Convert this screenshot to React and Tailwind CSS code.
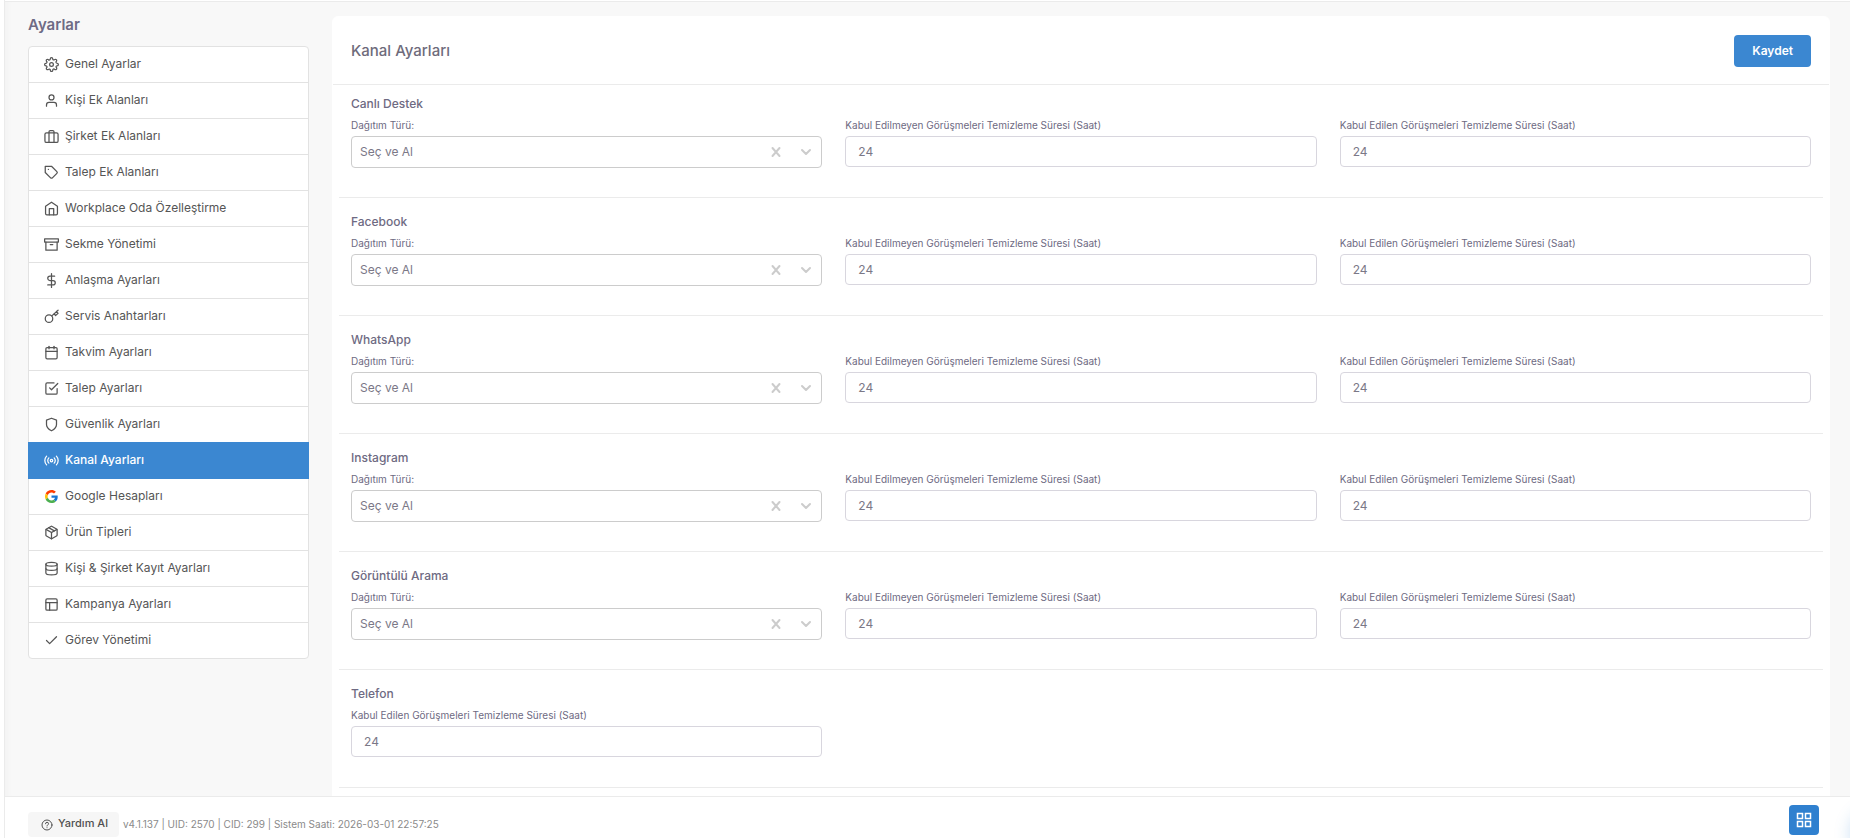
import React, { useState } from "react";
import {
  FiSettings,
  FiUser,
  FiTag,
  FiArchive,
  FiDollarSign,
  FiCalendar,
  FiCheckSquare,
  FiShield,
  FiPackage,
  FiDatabase,
  FiLayout,
  FiCheck,
} from "react-icons/fi";

// stroke icons that are not in the feather set
const StrokeIcon = ({ size = 15, width = 2, children }) => (
  <svg
    width={size}
    height={size}
    viewBox="0 0 24 24"
    fill="none"
    stroke="currentColor"
    strokeWidth={width}
    strokeLinecap="round"
    strokeLinejoin="round"
    aria-hidden="true"
  >
    {children}
  </svg>
);

const LuggageIcon = () => (
  <StrokeIcon>
    <rect x="1.5" y="6" width="21" height="15.5" rx="2.5" />
    <path d="M8 21.5V4.5a2 2 0 0 1 2-2h4a2 2 0 0 1 2 2v17" />
  </StrokeIcon>
);

const HouseIcon = () => (
  <StrokeIcon>
    <path d="M2.5 8.5 12 2l9.5 6.5V20a2 2 0 0 1-2 2h-15a2 2 0 0 1-2-2z" />
    <path d="M8.5 22V12h7v10" />
  </StrokeIcon>
);

const KeyIcon = () => (
  <StrokeIcon>
    <circle cx="8" cy="15.5" r="6" />
    <path d="M12.5 11 22.5 2M16 7.5l2.5 3 4-3.5-2.5-3" />
  </StrokeIcon>
);

const BroadcastIcon = () => (
  <StrokeIcon>
    <circle cx="12" cy="12" r="2" />
    <path d="M16.24 7.76a6 6 0 0 1 0 8.49M7.76 16.24a6 6 0 0 1 0-8.49M19.8 5a10 10 0 0 1 0 14M4.2 19a10 10 0 0 1 0-14" />
  </StrokeIcon>
);

const GoogleIcon = () => (
  <svg width="13" height="13" viewBox="0 0 48 48" aria-hidden="true">
    <path
      fill="#ff3d00"
      d="M24 0C14.6 0 6.51 5.38 2.56 13.22l7.98 6.19C12.43 13.72 17.74 9.5 24 9.5c3.54 0 6.71 1.22 9.21 3.6l6.85-6.85C35.9 2.38 30.47 0 24 0z"
    />
    <path
      fill="#1976d2"
      d="M46.98 24.55c0-1.57-.15-3.09-.38-4.55H24v9.02h12.94c-.58 2.96-2.26 5.48-4.78 7.18l7.73 6c4.51-4.18 7.09-10.36 7.09-17.65z"
    />
    <path
      fill="#ffc107"
      d="M10.53 28.59A14.5 14.5 0 0 1 9.77 24c0-1.6.27-3.14.76-4.59l-7.98-6.19A23.9 23.9 0 0 0 0 24c0 3.88.92 7.54 2.56 10.78z"
    />
    <path
      fill="#4caf50"
      d="M24 48c6.48 0 11.93-2.13 15.89-5.81l-7.73-6c-2.15 1.45-4.92 2.3-8.16 2.3-6.26 0-11.57-4.22-13.47-9.91l-7.98 6.19C6.51 42.62 14.62 48 24 48z"
    />
  </svg>
);

const menuItems = [
  { title: "Genel Ayarlar", icon: <FiSettings size={15} /> },
  { title: "Kişi Ek Alanları", icon: <FiUser size={15} /> },
  { title: "Şirket Ek Alanları", icon: <LuggageIcon /> },
  { title: "Talep Ek Alanları", icon: <FiTag size={15} /> },
  { title: "Workplace Oda Özelleştirme", icon: <HouseIcon /> },
  { title: "Sekme Yönetimi", icon: <FiArchive size={15} /> },
  { title: "Anlaşma Ayarları", icon: <FiDollarSign size={15} /> },
  { title: "Servis Anahtarları", icon: <KeyIcon /> },
  { title: "Takvim Ayarları", icon: <FiCalendar size={15} /> },
  { title: "Talep Ayarları", icon: <FiCheckSquare size={15} /> },
  { title: "Güvenlik Ayarları", icon: <FiShield size={15} /> },
  { title: "Kanal Ayarları", icon: <BroadcastIcon />, active: true },
  { title: "Google Hesapları", icon: <GoogleIcon /> },
  { title: "Ürün Tipleri", icon: <FiPackage size={15} /> },
  { title: "Kişi & Şirket Kayıt Ayarları", icon: <FiDatabase size={15} /> },
  { title: "Kampanya Ayarları", icon: <FiLayout size={15} /> },
  { title: "Görev Yönetimi", icon: <FiCheck size={15} /> },
];

const channels = [
  { id: "chat", title: "Canlı Destek" },
  { id: "facebook", title: "Facebook" },
  { id: "whatsapp", title: "WhatsApp" },
  { id: "instagram", title: "Instagram" },
  { id: "video", title: "Görüntülü Arama" },
  { id: "phone", title: "Telefon", onlyAccepted: true },
];

function Sidebar() {
  return (
    <aside className="w-[281px] shrink-0">
      <h1 className="mb-3 text-[15px] leading-[18px] font-semibold text-[#6e6b85]">
        Ayarlar
      </h1>
      <nav className="rounded border border-[#e2e2e2] bg-white">
        {menuItems.map((item) => (
          <a
            key={item.title}
            href="#"
            className={
              item.active
                ? "-mx-px -mt-px flex h-[37px] items-center gap-1.5 bg-[#3b87d1] px-4 text-xs font-medium text-white"
                : "flex h-9 items-center gap-1.5 border-b border-[#e2e2e2] px-[15px] text-xs text-[#555555] last:h-[35px] last:border-b-0"
            }
          >
            <span className="flex w-[15px] shrink-0 justify-center">
              {item.icon}
            </span>
            <span className="pb-0.5">{item.title}</span>
          </a>
        ))}
      </nav>
    </aside>
  );
}

function HourField({ id, label }) {
  const [value, setValue] = useState("24");

  return (
    <div>
      <label htmlFor={id} className="mb-1 block text-[10px] leading-[14px]">
        {label}
      </label>
      <input
        id={id}
        type="text"
        value={value}
        onChange={(e) => setValue(e.target.value)}
        className="block h-[31px] w-full rounded border border-[#d8d6de] bg-white px-3 pb-px text-xs text-[#7b7887] outline-none focus:border-[#3b87d1]"
      />
    </div>
  );
}

function DistributionSelect({ id }) {
  const [value, setValue] = useState("pick");

  return (
    <div>
      <label htmlFor={id} className="mb-1 block text-[10px] leading-[14px]">
        Dağıtım Türü:
      </label>
      <div className="relative">
        <select
          id={id}
          value={value}
          onChange={(e) => setValue(e.target.value)}
          className="block h-8 w-full appearance-none rounded border border-[#cccccc] bg-white px-2 text-xs text-[#7b7887] outline-none"
        >
          <option value=""></option>
          <option value="pick">Seç ve Al</option>
        </select>
        <div className="pointer-events-none absolute inset-y-0 right-2.5 flex items-center gap-[18px] text-[#cccccc]">
          <button
            type="button"
            aria-label="Temizle"
            onClick={() => setValue("")}
            className="pointer-events-auto"
          >
            <StrokeIcon size={12} width={4}>
              <path d="M5 4l14 16M19 4L5 20" />
            </StrokeIcon>
          </button>
          <StrokeIcon size={12} width={4}>
            <path d="M4 8l8 8 8-8" />
          </StrokeIcon>
        </div>
      </div>
    </div>
  );
}

function ChannelSection({ channel }) {
  const { id, title, onlyAccepted } = channel;

  return (
    <section className="min-h-[118px] border-b border-[#ebebeb] px-3 pt-[15px] pb-[29px] text-[#6e6a82] first:min-h-0 first:pt-2.5">
      <h3 className="mb-[5px] text-xs leading-[18px] font-medium">{title}</h3>
      <div className="grid grid-cols-3 gap-[23px]">
        {!onlyAccepted && (
          <>
            <DistributionSelect id={`${id}-type`} />
            <HourField
              id={`${id}-unaccepted`}
              label="Kabul Edilmeyen Görüşmeleri Temizleme Süresi (Saat)"
            />
          </>
        )}
        <HourField
          id={`${id}-accepted`}
          label="Kabul Edilen Görüşmeleri Temizleme Süresi (Saat)"
        />
      </div>
    </section>
  );
}

function Footer() {
  return (
    <footer className="relative flex h-[42px] shrink-0 items-start overflow-hidden border-t border-[#ebebeb] bg-white pr-[31px] pl-[23px]">
      <button
        type="button"
        className="mt-[15px] flex h-[25px] items-center gap-[5px] rounded bg-[#f6f6f6] pr-[11px] pl-[13px] text-[11px] font-medium text-[#505050]"
      >
        <StrokeIcon size={12}>
          <circle cx="12" cy="12" r="10" />
          <path d="M9 9.5a3 3 0 0 1 6 0c0 2-3 2.5-3 4.5M12 17.5v.01" />
        </StrokeIcon>
        <span className="pb-0.5">Yardım Al</span>
      </button>
      <p className="mt-5 ml-1 text-[10px] leading-[14px] text-[#8a8a8a]">
        v4.1.137 | UID: 2570 | CID: 299 | Sistem Saati: 2026-03-01 22:57:25
      </p>
      <button
        type="button"
        aria-label="Uygulamalar"
        className="mt-2 ml-auto flex size-[30px] items-center justify-center rounded bg-[#2f80cf] text-white"
      >
        <svg
          width="16"
          height="16"
          viewBox="0 0 16 16"
          fill="none"
          stroke="currentColor"
          strokeWidth="1.5"
        >
          <path d="M1.5 1.5h5v5h-5zM9.5 1.5h5v5h-5zM1.5 9.5h5v5h-5zM9.5 9.5h5v5h-5z" />
        </svg>
      </button>
      {/* glow of the floating chat bubble */}
      <div className="pointer-events-none absolute top-3 -right-12 size-12 rounded-full shadow-[0_0_16px_rgba(47,128,207,0.25)]" />
    </footer>
  );
}

export default function App() {
  return (
    <div className="h-screen overflow-hidden bg-white pl-1 font-['Inter','Liberation_Sans',sans-serif] text-[#6e6b7b]">
      <div className="flex h-full flex-col border-l border-[#ebebeb] pt-px">
        <div className="flex min-h-0 flex-1 gap-[23px] overflow-hidden border-t border-[#ebebeb] bg-[#f8f8f8] pt-3.5 pr-5 pl-[23px] shadow-[inset_8px_0_10px_-8px_rgba(0,0,0,0.04)]">
          <Sidebar />
          <main className="min-w-0 flex-1">
            <div className="rounded-md border border-white bg-white">
              <div className="flex h-[68px] items-center justify-between border-b border-[#ebebeb] px-[18px] pt-px">
                <h2 className="text-[15px] font-medium">Kanal Ayarları</h2>
                <button
                  type="button"
                  className="h-8 rounded bg-[#3b87d1] px-[18px] text-xs font-semibold text-white"
                >
                  Kaydet
                </button>
              </div>
              <div className="px-1.5 pb-8">
                {channels.map((channel) => (
                  <ChannelSection key={channel.id} channel={channel} />
                ))}
              </div>
            </div>
          </main>
        </div>
        <Footer />
      </div>
    </div>
  );
}
